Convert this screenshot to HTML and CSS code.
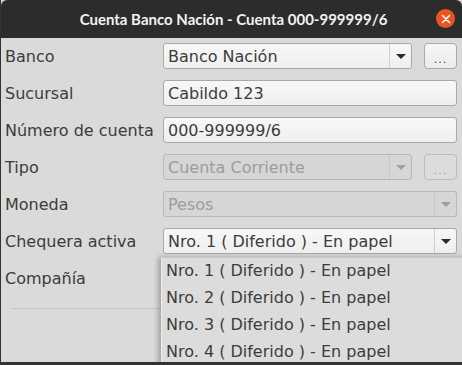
FILE: index.html
```html
<!DOCTYPE html>
<html lang="es">
<head>
  <meta charset="UTF-8" />
  <title>Cuenta Banco Nación</title>
  <link rel="stylesheet" href="styles.css">
</head>
<body>
  <div class="window">
    <div class="titlebar">
      <span class="title">Cuenta Banco Nación - Cuenta 000-999999/6</span>
      <span class="close">
        <svg width="10" height="10" viewBox="0 0 10 10"><path d="M1.5 1.5 L8.5 8.5 M8.5 1.5 L1.5 8.5" stroke="#fff" stroke-width="1.6" stroke-linecap="round"/></svg>
      </span>
    </div>

    <div class="form">
      <label>Banco</label>
      <div class="combo">
        <span class="value">Banco Nación</span>
        <span class="arrow"></span>
      </div>
      <button class="more">...</button>

      <label>Sucursal</label>
      <div class="entry wide">Cabildo 123</div>

      <label>Número de cuenta</label>
      <div class="entry wide">000-999999/6</div>

      <label>Tipo</label>
      <div class="combo disabled">
        <span class="value">Cuenta Corriente</span>
        <span class="arrow"></span>
      </div>
      <button class="more disabled">...</button>

      <label>Moneda</label>
      <div class="combo wide disabled">
        <span class="value">Pesos</span>
        <span class="arrow"></span>
      </div>

      <label>Chequera activa</label>
      <div class="combo wide">
        <span class="value">Nro. 1 ( Diferido ) - En papel</span>
        <span class="arrow"></span>
      </div>

      <label>Compañía</label>
      <div class="entry wide"></div>
    </div>

    <hr class="separator">

    <!-- open dropdown of "Chequera activa" -->
    <ul class="popup">
      <li>Nro. 1 ( Diferido ) - En papel</li>
      <li>Nro. 2 ( Diferido ) - En papel</li>
      <li>Nro. 3 ( Diferido ) - En papel</li>
      <li>Nro. 4 ( Diferido ) - En papel</li>
    </ul>
  </div>
</body>
</html>
```

FILE: styles.css
```css
body {
  margin: 0;
  background: #2b2b2b;
  font-family: "DejaVu Sans", sans-serif;
}
.window {
  position: relative;
  width: 462px;
  height: 365px;
  overflow: hidden;
  background: #dadada;
  box-sizing: border-box;
  border-left: 1px solid #333;
  border-bottom: 3px solid #333;
}
.titlebar {
  height: 38px;
  background: #2c2c2c;
  display: flex;
  align-items: center;
  justify-content: center;
  position: relative;
  border-radius: 6px 6px 0 0;
}
.title {
  color: #f2f2f2;
  font-family: "Lato", sans-serif;
  font-weight: bold;
  font-size: 15px;
  margin-left: 4px;
}
.close {
  position: absolute;
  right: 7px;
  top: 9px;
  width: 19px;
  height: 19px;
  border-radius: 50%;
  background: #e95420;
  display: flex;
  align-items: center;
  justify-content: center;
}
.form {
  display: grid;
  grid-template-columns: 146px 1fr 33px;
  grid-auto-rows: 26px;
  column-gap: 12px;
  row-gap: 11px;
  padding: 5px 5px 0 4px;
  color: #3c3c3c;
  font-size: 16px;
}
.form label {
  display: flex;
  align-items: center;
  grid-column: 1;
  white-space: nowrap;
}
.wide {
  grid-column: 2 / 4;
}
.entry, .combo {
  box-sizing: border-box;
  border: 1px solid #a9a9a9;
  border-radius: 3px;
  background: linear-gradient(#f7f7f7, #efefef);
  display: flex;
  align-items: center;
  padding-left: 4px;
  color: #3c3c3c;
}
.combo {
  padding-left: 0;
}
.combo .value {
  flex: 1;
  padding-left: 4px;
}
.combo .arrow {
  width: 21px;
  height: 100%;
  border-left: 1px solid #cfcfcf;
  display: flex;
  align-items: center;
  justify-content: center;
}
.combo .arrow::after {
  content: "";
  border-left: 5px solid transparent;
  border-right: 5px solid transparent;
  border-top: 5px solid #2b2b2b;
}
.combo.disabled {
  background: #d6d6d6;
  border-color: #b8b8b8;
  color: #9c9c9c;
}
.combo.disabled .arrow {
  border-left-color: #c6c6c6;
}
.combo.disabled .arrow::after {
  border-top-color: #a0a0a0;
}
.more {
  box-sizing: border-box;
  border: 1px solid #a9a9a9;
  border-radius: 4px;
  background: linear-gradient(#f6f6f6, #ececec);
  color: #3c3c3c;
  font-family: "DejaVu Sans", sans-serif;
  font-size: 11px;
  padding: 6px 0 0 0;
  letter-spacing: 1px;
}
.more.disabled {
  background: #dcdcdc;
  border-color: #bdbdbd;
  color: #a6a6a6;
}
.separator {
  margin: 17px 0 0 10px;
  border: none;
  border-top: 1px solid #c2c2c2;
  width: 440px;
}
.popup {
  position: absolute;
  left: 160px;
  top: 257px;
  width: 310px;
  margin: 0;
  padding: 0;
  list-style: none;
  background: #dcdcdc;
  border-top: 1px solid #c8c8c8;
  border-left: 1px solid #ededed;
  box-shadow: -3px 0 5px rgba(0, 0, 0, 0.25);
  font-size: 16px;
  color: #3c3c3c;
}
.popup li {
  height: 27px;
  line-height: 26px;
  padding-left: 4px;
}
```
